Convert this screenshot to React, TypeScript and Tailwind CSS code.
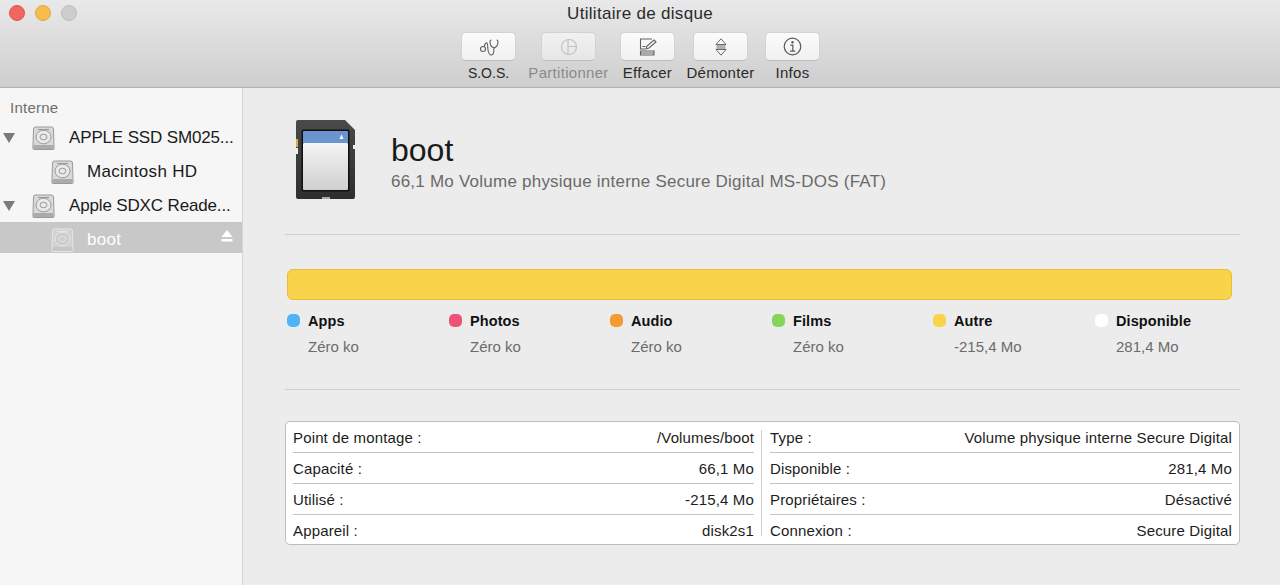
import type { ReactNode } from "react";

function HddIcon({ selected }: { selected?: boolean }) {
  const body = selected ? "#d2d2d2" : "#d9d9d9";
  const line = selected ? "#e6e6e6" : "#9a9a9a";
  const disc = selected ? "#cdcdcd" : "#e9e9e9";
  return (
    <svg width="23" height="24" viewBox="0 0 23 24" className="shrink-0">
      <path d="M3.500 1h16a2 2 0 0 1 2 2l.6 19.500a1 1 0 0 1-1 1H1.900a1 1 0 0 1-1-1L1.500 3a2 2 0 0 1 2-2z" fill={body} stroke={line} />
      <rect x="1.500" y="19" width="20" height="4" fill={selected ? "#c6c6c6" : "#ababab"} />
      <ellipse cx="11.500" cy="11" rx="7.500" ry="6.800" fill={disc} stroke={line} />
      <ellipse cx="11.500" cy="11" rx="3.500" ry="2.800" fill="none" stroke={line} />
      <rect x="6" y="3" width="11" height="1" fill={line} />
    </svg>
  );
}

function TreeRow({ label, child, selected }: { label: string; child?: boolean; selected?: boolean }) {
  return (
    <div className={`flex items-center h-[31px] pt-[5px] mb-[3px] ${selected ? "bg-[#c8c8c8]" : ""}`}>
      {child ? (
        <div className="w-[51px] shrink-0" />
      ) : (
        <div className="w-[32px] shrink-0 pl-[3px]">
          <div className="w-0 h-0 border-l-[6px] border-r-[6px] border-t-[10px] border-l-transparent border-r-transparent border-t-[#7b7b7b]" />
        </div>
      )}
      <HddIcon selected={selected} />
      <span
        className={`text-[17px] whitespace-nowrap ${child ? "ml-[13px] tracking-[0.3px]" : "ml-[14px] tracking-[-0.15px]"} ${selected ? "text-white" : "text-[#1a1a1a]"}`}
      >
        {label}
      </span>
      {selected && (
        <svg width="12" height="12" viewBox="0 0 12 12" className="ml-auto mr-[9px] mb-[8px]">
          <path d="M6 0l5.500 7H.5z" fill="#fff" />
          <rect x=".5" y="9" width="11" height="2.500" fill="#fff" />
        </svg>
      )}
    </div>
  );
}

function ToolButton({ label, disabled, space, labelClass, children }: { label: string; disabled?: boolean; space?: string; labelClass?: string; children: ReactNode }) {
  return (
    <div className={`flex flex-col items-center w-[55px] ${space ?? ""}`}>
      <div
        className={`w-[55px] h-[29px] rounded-[5px] flex items-center justify-center bg-gradient-to-b border border-[#d2d2d2] border-b-[#bcbcbc] ${disabled ? "from-[#f1f1f1] to-[#e7e7e7]" : "from-[#fbfbfb] to-[#f1f1f1]"}`}
      >
        {children}
      </div>
      <span
        className={`mt-[3px] leading-[18px] whitespace-nowrap ${labelClass ?? "text-[15px] tracking-[0.3px]"} ${disabled ? "text-[#8a8a8a]" : "text-[#2a2a2a]"}`}
      >
        {label}
      </span>
    </div>
  );
}

function Legend({ color, name, value, width }: { color: string; name: string; value: string; width: string }) {
  return (
    <div className={`${width} shrink-0`}>
      <div className="flex items-center h-[20px] mt-[12px]">
        <div className={`w-[13px] h-[13px] rounded-[5px] ${color} mr-[8px] mb-[4px]`} />
        <span className="text-[14.500px] font-bold tracking-[0.1px] text-[#111]">{name}</span>
      </div>
      <div className="pl-[21px] mt-[5px] text-[15px] leading-[20px] text-[#6b6b6b]">{value}</div>
    </div>
  );
}

function InfoRow({ label, value, last }: { label: string; value: string; last?: boolean }) {
  return (
    <div
      className={`flex justify-between items-start pt-[7px] leading-[17px] text-[15px] tracking-[0.15px] text-[#1c1c1c] ${last ? "h-[29px]" : "h-[31px] border-b border-[#c4c4c4]"}`}
    >
      <span>{label}</span>
      <span>{value}</span>
    </div>
  );
}

export default function App() {
  return (
    <div className="w-[1280px] h-[585px] overflow-hidden flex flex-col bg-[#ececec] font-['Liberation_Sans',Arial,sans-serif]">
      {/* toolbar */}
      <div className="relative h-[88px] shrink-0 bg-gradient-to-b from-[#e9e9e9] to-[#cecece] border-b border-[#b1b1b1] flex flex-col items-center">
        <div className="absolute left-[9px] top-[5px] flex gap-[10px]">
          <div className="w-[16px] h-[16px] rounded-full bg-[#f1675f] border border-[#e0564e]" />
          <div className="w-[16px] h-[16px] rounded-full bg-[#f6bd4d] border border-[#e2a93a]" />
          <div className="w-[16px] h-[16px] rounded-full bg-[#cdcdcd] border border-[#bcbcbc]" />
        </div>
        <div className="h-[32px] pt-[3px] text-[17px] tracking-[0.3px] leading-[22px] text-[#2b2b2b]">Utilitaire de disque</div>
        <div className="flex ml-[1px]">
          <ToolButton label="S.O.S." space="mr-[25px]" labelClass="text-[14px]">
            <svg width="20" height="18" viewBox="0 0 20 18" fill="none" stroke="#606060" strokeWidth="1.100">
              <circle cx="4" cy="11" r="2.500" />
              <path d="M5 8.700C6 6 7 4.500 8 5c1 .5.500 4 1 7 .5 3.500 2 5 3.500 5 2 0 2.500-2 2.500-7" />
              <path d="M15 10c-2.500-1-4-4-4-6.500 0-1 .5-1.500 1.500-1.500M15 10c2.500-1 4-4 4-6.500 0-1-.5-1.500-1.500-1.500" />
            </svg>
          </ToolButton>
          <ToolButton label="Partitionner" disabled space="mr-[24px]">
            <svg width="18" height="18" viewBox="0 0 18 18" fill="none" stroke="#c2c2c2" strokeWidth="1.200">
              <circle cx="9" cy="9" r="7.500" />
              <path d="M8 1.500v15M8 8.500h8.500" />
            </svg>
          </ToolButton>
          <ToolButton label="Effacer" space="mr-[18px]">
            <svg width="18" height="18" viewBox="0 0 18 18" fill="none" stroke="#606060" strokeWidth="1.100">
              <path d="M13 1H1.500v10H6M1.500 4.500" />
              <path d="M1.500 13h13.500v4H1.500zM1.500 15h13.500" />
              <path d="M3.500 8.500h3M7 11l1-3 7-6 2 2-7 6z" />
            </svg>
          </ToolButton>
          <ToolButton label="Démonter" space="mr-[17px]">
            <svg width="12" height="18" viewBox="0 0 12 18" fill="none" stroke="#6a6a6a" strokeWidth="1">
              <path d="M6 .8L11 6.500H1zM1.500 8h9M1.500 10h9M6 17.200L1 11.500h10z" />
            </svg>
          </ToolButton>
          <ToolButton label="Infos">
            <svg width="19" height="19" viewBox="0 0 19 19" fill="none" stroke="#5a5a5a" strokeWidth="1.200">
              <circle cx="9.500" cy="9.500" r="8.300" />
              <circle cx="9.500" cy="5.300" r="1.200" fill="#5a5a5a" stroke="none" />
              <path d="M7.300 8.200h2.500v5.800M7 14.200h5.200" />
            </svg>
          </ToolButton>
        </div>
      </div>

      <div className="flex flex-1 min-h-0">
        {/* sidebar */}
        <div className="w-[243px] shrink-0 bg-[#f6f6f6] border-r border-[#d4d4d4] pt-[11px]">
          <div className="pl-[10px] h-[20px] text-[15px] tracking-[0.25px] leading-[18px] text-[#6e6e6e]">Interne</div>
          <div className="mt-[1px]">
            <TreeRow label="APPLE SSD SM025..." />
            <TreeRow label="Macintosh HD" child />
            <TreeRow label="Apple SDXC Reade..." />
            <TreeRow label="boot" child selected />
          </div>
        </div>

        {/* main */}
        <div className="flex-1 min-w-0 pl-[42px] pr-[40px]">
          <div className="h-[147px] flex items-start border-b border-[#cfcfcf]">
            <svg width="60" height="80" viewBox="0 0 60 80" className="ml-[11px] mt-[32px] shrink-0">
              <defs>
                <linearGradient id="sdBody" x1="0" y1="0" x2="0" y2="1">
                  <stop offset="0" stopColor="#f5f5f5" />
                  <stop offset="1" stopColor="#cfcfcf" />
                </linearGradient>
                <linearGradient id="sdCase" x1="0" y1="0" x2="0" y2="1">
                  <stop offset="0" stopColor="#4a4a4a" />
                  <stop offset="1" stopColor="#2e2e2e" />
                </linearGradient>
              </defs>
              <path d="M2 0h47l10 10v67a2 2 0 0 1-2 2H2a2 2 0 0 1-2-2V2a2 2 0 0 1 2-2z" fill="url(#sdCase)" />
              <rect x="0" y="19" width="2" height="8" fill="#d8b040" />
              <rect x="0" y="28" width="2" height="6" fill="#eeeeee" />
              <rect x="57" y="25" width="2" height="4" fill="#eeeeee" />
              <rect x="26" y="77" width="8" height="2" fill="#aaaaaa" />
              <rect x="5.500" y="9.500" width="48" height="62" rx="2" fill="#111" />
              <rect x="7" y="23" width="45" height="47" rx="1" fill="url(#sdBody)" />
              <path d="M8 11h43a1 1 0 0 1 1 1v11H7V12a1 1 0 0 1 1-1z" fill="#6a94d0" />
              <path d="M45.500 14.500l2 4.500h-4z" fill="#fff" />
            </svg>
            <div className="ml-[35px] mt-[43px]">
              <div className="text-[32px] leading-[38px] text-[#1a1a1a]">boot</div>
              <div className="text-[17px] tracking-[0.23px] leading-[22px] text-[#6a6a6a] mt-[2px]">66,1 Mo Volume physique interne Secure Digital MS-DOS (FAT)</div>
            </div>
          </div>

          <div className="h-[155px] border-b border-[#cfcfcf] pt-[34px] pl-[2px] pr-[8px]">
            <div className="h-[31px] rounded-[6px] bg-[#f9d349] border border-[#e8bd3a]" />
            <div className="flex">
              <Legend color="bg-[#4fb3f5]" name="Apps" value="Zéro ko" width="w-[162px]" />
              <Legend color="bg-[#ee5277]" name="Photos" value="Zéro ko" width="w-[161px]" />
              <Legend color="bg-[#f39c34]" name="Audio" value="Zéro ko" width="w-[162px]" />
              <Legend color="bg-[#84d65a]" name="Films" value="Zéro ko" width="w-[161px]" />
              <Legend color="bg-[#f9d349]" name="Autre" value="-215,4 Mo" width="w-[162px]" />
              <Legend color="bg-white" name="Disponible" value="281,4 Mo" width="w-[120px]" />
            </div>
          </div>

          <div className="mt-[31px] h-[124px] rounded-[5px] bg-white border border-[#bdbdbd] flex px-[7px]">
            <div className="w-[461px] shrink-0">
              <InfoRow label="Point de montage :" value="/Volumes/boot" />
              <InfoRow label="Capacité :" value="66,1 Mo" />
              <InfoRow label="Utilisé :" value="-215,4 Mo" />
              <InfoRow label="Appareil :" value="disk2s1" last />
            </div>
            <div className="w-px bg-[#cfcfcf] my-[8px] ml-[7px] mr-[8px]" />
            <div className="flex-1">
              <InfoRow label="Type :" value="Volume physique interne Secure Digital" />
              <InfoRow label="Disponible :" value="281,4 Mo" />
              <InfoRow label="Propriétaires :" value="Désactivé" />
              <InfoRow label="Connexion :" value="Secure Digital" last />
            </div>
          </div>
        </div>
      </div>
    </div>
  );
}
